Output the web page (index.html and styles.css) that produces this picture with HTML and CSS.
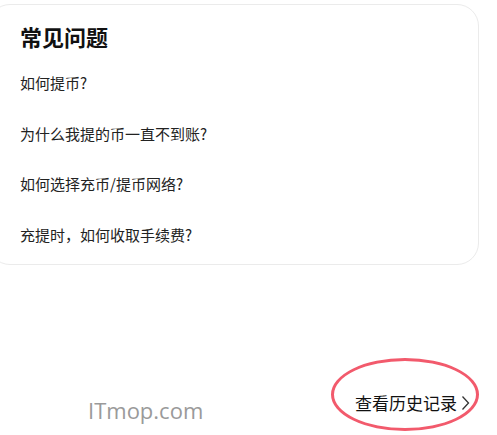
FILE: index.html
```html
<!DOCTYPE html>
<html lang="zh-CN">
<head>
<meta charset="utf-8">
<link rel="stylesheet" href="styles.css">
</head>
<body>
<section class="card">
  <h2 class="title">常见问题</h2>
  <ul class="faq">
    <li>如何提币?</li>
    <li>为什么我提的币一直不到账?</li>
    <li>如何选择充币/提币网络?</li>
    <li>充提时，如何收取手续费?</li>
  </ul>
</section>
<footer class="footer">
  <span class="watermark">ITmop.com</span>
  <a class="history">查看历史记录<svg class="chev" width="9" height="16" viewBox="0 0 9 16"><path d="M1.5 1.5 L7.5 8 L1.5 14.5" fill="none" stroke="#333" stroke-width="1.3"/></svg><span class="ring"></span></a>
</footer>
</body>
</html>
```
FILE: styles.css
```css
html, body {
  margin: 0;
  padding: 0;
  background: #ffffff;
  width: 497px;
  height: 435px;
  overflow: hidden;
  font-family: "Noto Sans CJK SC", "Noto Sans", sans-serif;
  color: #1a1a1a;
}
.card {
  margin: 4px 18px 0 -12px;
  height: 261px;
  box-sizing: border-box;
  border: 1.5px solid #ebebeb;
  border-radius: 22px;
  padding: 16px 0 0 31px;
}
.title {
  margin: 0;
  font-size: 22px;
  line-height: 30px;
  font-weight: 700;
  color: #111;
}
.faq {
  list-style: none;
  margin: 22px 0 0;
  padding: 0;
  display: flex;
  flex-direction: column;
  gap: 30.5px;
}
.faq li {
  font-size: 15px;
  line-height: 20px;
  color: #222;
}
.footer {
  display: flex;
  align-items: flex-start;
  justify-content: space-between;
  padding: 0 27px 0 88px;
  margin-top: 126px;
}
.watermark {
  font-family: "Open Sans", "Noto Sans", sans-serif;
  font-size: 22px;
  line-height: 30px;
  color: #9a9a9a;
  margin-top: 4px;
}
.history {
  position: relative;
  display: flex;
  align-items: center;
  gap: 4px;
  font-size: 17px;
  line-height: 24px;
  color: #111;
}
.chev {
  display: block;
}
.ring {
  position: absolute;
  left: -24px;
  top: -33px;
  width: 142px;
  height: 67px;
  border: 3px solid #f25a6c;
  border-radius: 50%;
}
```
